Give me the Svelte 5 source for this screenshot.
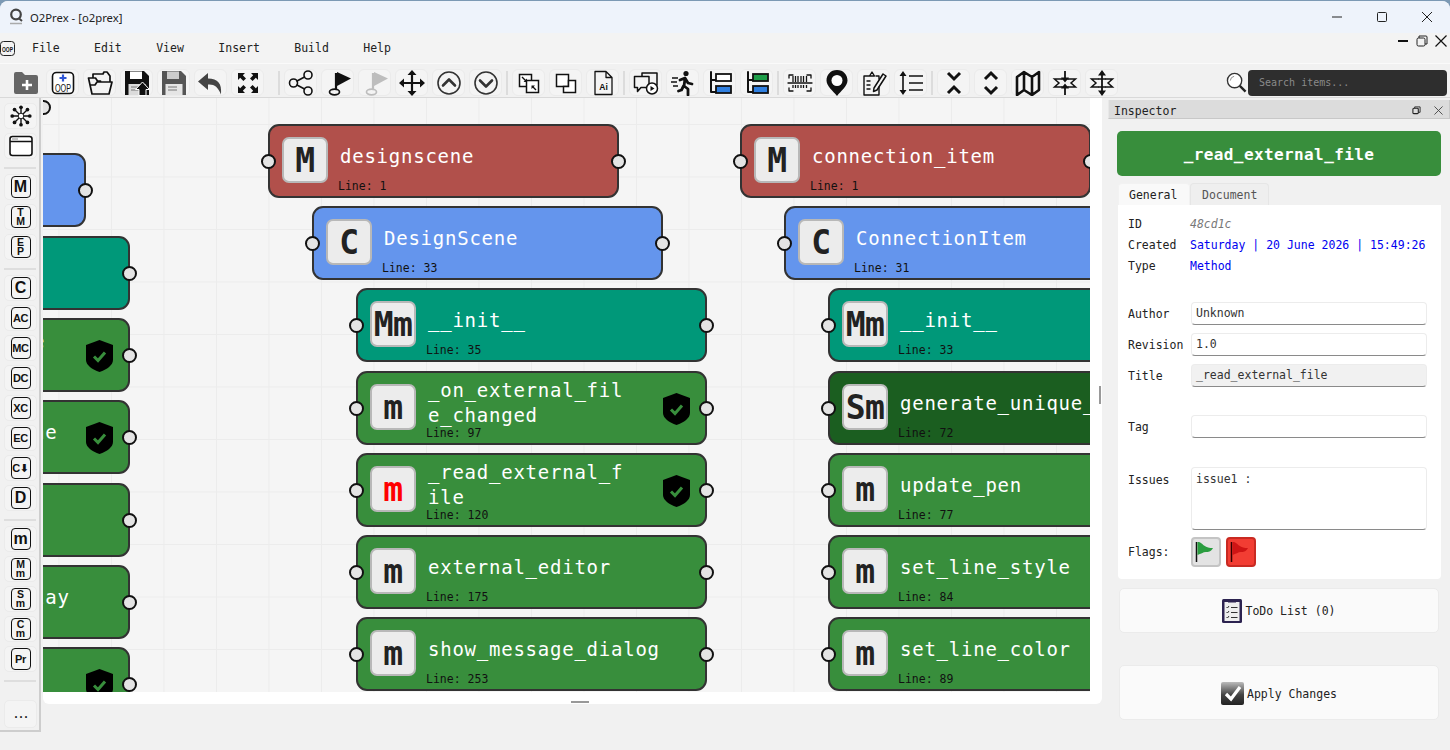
<script>
  const OX = 43, OY = 98;
  const red = '#b1504b', blue = '#6495ed', teal = '#009879', green = '#388e3c', dark = '#1b5e20';
  const n = (x, y, color, icon, title, line, shield = false, alert = false) => ({ x: x - OX, y: y - OY, color, icon, title, line, shield, alert });
  const nodes = [
    n(-265, 153, blue, 'C', '', ''),
    n(-221, 236, teal, 'Mm', '', ''),
    n(-221, 318, green, 'm', '', '', true),
    n(-221, 400, green, 'm', '', '', true),
    n(-221, 483, green, 'm', '', ''),
    n(-221, 565, green, 'm', '', ''),
    n(-221, 647, green, 'm', '', '', true),
    n(268, 124, red, 'M', 'designscene', 'Line: 1'),
    n(312, 206, blue, 'C', 'DesignScene', 'Line: 33'),
    n(356, 288, teal, 'Mm', '__init__', 'Line: 35'),
    n(356, 371, green, 'm', '_on_external_fil\ne_changed', 'Line: 97', true),
    n(356, 453, green, 'm', '_read_external_f\nile', 'Line: 120', true, true),
    n(356, 535, green, 'm', 'external_editor', 'Line: 175'),
    n(356, 617, green, 'm', 'show_message_dialog', 'Line: 253'),
    n(740, 124, red, 'M', 'connection_item', 'Line: 1'),
    n(784, 206, blue, 'C', 'ConnectionItem', 'Line: 31'),
    n(828, 288, teal, 'Mm', '__init__', 'Line: 33'),
    n(828, 371, dark, 'Sm', 'generate_unique_name', 'Line: 72'),
    n(828, 453, green, 'm', 'update_pen', 'Line: 77'),
    n(828, 535, green, 'm', 'set_line_style', 'Line: 84'),
    n(828, 617, green, 'm', 'set_line_color', 'Line: 89')
  ];
  const fragments = [
    { x: 33 - OX, y: 329 - OY, t: 'e' },
    { x: 33 - OX, y: 420 - OY, t: 'ne' },
    { x: 33 - OX, y: 585 - OY, t: 'lay' }
  ];

  const S = 'fill="none" stroke="#111" stroke-linecap="round" stroke-linejoin="round"';
  const floppy = (c, label) => `<path fill="${c}" d="M1 1h19l5 5v19H1z"/><rect x="6" y="1.500" width="12" height="7.500" fill="${label}"/><rect x="4.500" y="14" width="17" height="11" fill="#fff" opacity=".85"/><path stroke="#777" d="M7 17h9M7 20h9"/>`;
  const flag = (c) => `<path d="M11 3v17" stroke="${c}" stroke-width="2.200" fill="none"/><path fill="${c}" d="M12 2l14 6.500L12 16z"/><ellipse cx="9.500" cy="22" rx="5" ry="2.800" fill="none" stroke="${c}" stroke-width="1.700"/>`;
  const corner = `<path fill="#111" d="M3 3h7L7.800 5.200l3.200 3.200-2.600 2.600-3.200-3.200L3 10z"/>`;
  const wings = `<path fill="none" stroke="#111" stroke-width="1.500" stroke-linejoin="miter" d="M9.500 9H2.500L7 13l-4.500 4h7M16.500 9h7L19 13l4.500 4h-7"/><path stroke="#111" stroke-width="1.500" d="M9 9h8M9 17h8"/>`;
  const icons = {
    addfolder: `<path fill="#666" d="M1 4a2 2 0 0 1 2-2h6l3 3h11a2 2 0 0 1 2 2v15a2 2 0 0 1-2 2H3a2 2 0 0 1-2-2z"/><path stroke="#fff" stroke-width="2.600" d="M14 10v10M9 15h10"/>`,
    oop: `<rect x="2.500" y="2.500" width="21" height="21" rx="4" fill="#fff" stroke="#111" stroke-width="1.600"/><path stroke="#2f55d4" stroke-width="2.200" d="M13 4.500v7M9.500 8h7"/><text x="13" y="21.500" text-anchor="middle" font-family="Liberation Sans" font-weight="400" font-size="10" textLength="16" lengthAdjust="spacingAndGlyphs" fill="#111">OOP</text>`,
    open: `<path ${S} stroke-width="1.700" d="M5 24L1.500 8h7l2 3h3M5 24h17l3-12H10L8 15H3M6 8V4h10l1-2h3l3 4v6"/>`,
    saveup: floppy('#111', '#fff') + `<path fill="#111" stroke="#fff" stroke-width="1" d="M15 25.500v-6h-3.500l7-7.500 7 7.500H22v6z"/>`,
    save: floppy('#555', '#ccc'),
    undo: `<path fill="#444" d="M10 3L0 11.500 10 20v-5.500c6-.5 10 2 13 10 1-11-3-16-13-16z"/>`,
    full: corner + `<g transform="matrix(-1 0 0 1 26 0)">${corner}</g><g transform="matrix(1 0 0 -1 0 26)">${corner}</g><g transform="matrix(-1 0 0 -1 26 26)">${corner}</g>`,
    share: `<g ${S} stroke-width="1.600"><circle cx="5.500" cy="13" r="4"/><circle cx="20" cy="5" r="4"/><circle cx="20" cy="21" r="4"/><path d="M9 11l7.500-4M9 15l7.500 4"/></g>`,
    flag: flag('#111'),
    flagoff: flag('#bdbdbd'),
    move: `<path stroke="#111" stroke-width="2.200" d="M13 4v18M4 13h18"/><path fill="#111" d="M13 0l4.500 5h-9zM13 26l-4.500-5h9zM0 13l5-4.500v9zM26 13l-5 4.500v-9z"/>`,
    up: `<circle cx="13" cy="13" r="11" fill="none" stroke="#333" stroke-width="1.600"/><path fill="none" stroke="#333" stroke-width="2.600" stroke-linecap="round" stroke-linejoin="round" d="M7 15.500l6-6 6 6"/>`,
    down: `<circle cx="13" cy="13" r="11" fill="none" stroke="#333" stroke-width="1.600"/><path fill="none" stroke="#333" stroke-width="2.600" stroke-linecap="round" stroke-linejoin="round" d="M7 10.500l6 6 6-6"/>`,
    group: `<rect x="3.500" y="4.500" width="12" height="12" fill="#fff" stroke="#111" stroke-width="1.500"/><rect x="10.500" y="10.500" width="12" height="12" fill="#fff" stroke="#111" stroke-width="1.500"/><path stroke="#111" stroke-width="1.400" d="M6 7l4 4M20 20l-3.500-3.500"/><path fill="#111" d="M11 12H7.500L11 8.500zM15.500 15.500h3.500L15.500 19z"/>`,
    overlap: `<rect x="3.500" y="4.500" width="12" height="12" fill="#fff" stroke="#111" stroke-width="1.500"/><path fill="#fff" stroke="#111" stroke-width="1.500" d="M15.500 10.500h7v12h-12v-6h5z"/>`,
    ai: `<path ${S} stroke-width="1.300" d="M5 1.500h11l6 6v17H5zM16 1.500v6h6"/><text x="13.500" y="20" text-anchor="middle" font-family="Liberation Sans" font-weight="700" font-size="8.500" fill="#111">Ai</text>`,
    chat: `<path ${S} stroke-width="1.500" d="M9 6V3h15v12M1.500 6.500h14.500v11H8l-3.500 4v-4h-3z"/><circle cx="19" cy="18.500" r="5.500" fill="#fff" stroke="#111" stroke-width="1.500"/><path fill="#111" d="M17.500 16l4 2.500-4 2.500z"/>`,
    run: `<circle cx="16" cy="3.500" r="2.600" fill="#111"/><path ${S} stroke-width="2.800" d="M10 10l5-2 3 5 4 1M15 9l-1 7 4 3v6M13.500 16l-2 4-3 1"/><path stroke="#111" stroke-width="1.600" d="M2 8h6M1 12h6M3 16h5"/>`,
    treew: `<path ${S} stroke-width="2" d="M4 2v20h5M4 10h5"/><rect x="9" y="4" width="15" height="7" fill="#fff" stroke="#111" stroke-width="1.800"/><rect x="9" y="16" width="15" height="7" fill="#2f7fe0" stroke="#111" stroke-width="1.800"/>`,
    treeg: `<path ${S} stroke-width="2" d="M4 2v20h5M4 10h5"/><rect x="9" y="4" width="15" height="7" fill="#1e9e49" stroke="#111" stroke-width="1.800"/><rect x="9" y="16" width="15" height="7" fill="#2f7fe0" stroke="#111" stroke-width="1.800"/>`,
    barcode: `<path ${S} stroke-width="1.300" d="M2 8V5h4M20 5h4v3M2 18v3h4M20 21h4v-3M1 13h24"/><path stroke="#111" stroke-width="1.300" d="M6 6v6M8.500 6v6M11 6v6M14 6v6M16.500 6v6M19.500 6v6M6 15v3M8.500 15v3M11 15v3M14 15v3M16.500 15v3M19.500 15v3"/>`,
    pin: `<path fill="#111" d="M13 0C6.500 0 2.500 5 2.500 10.500 2.500 16 9 21 13 26c4-5 10.500-10 10.500-15.500C23.500 5 19.500 0 13 0z"/><circle cx="13" cy="10.500" r="5.500" fill="#fff"/>`,
    note: `<path ${S} stroke-width="1.400" d="M3 6h5M15 6h3v3M3 6v19h15V17M8.500 6l2.500-4 2.500 4zM6 11h3M6 15h3M6 19h3"/><path ${S} stroke-width="1.500" d="M13 18l9-14 3 2-9 14-3.500 1.500z"/>`,
    spacing: `<path stroke="#111" stroke-width="1.600" d="M11 6h14M11 13h14M11 20h14M5 5v16"/><path fill="#111" d="M5 1l3.500 5h-7zM5 25l-3.500-5h7z"/>`,
    collapse: `<path fill="none" stroke="#111" stroke-width="3" d="M7 3l6 6 6-6M7 23l6-6 6 6"/>`,
    expand: `<path fill="none" stroke="#111" stroke-width="3" d="M7 9l6-6 6 6M7 17l6 6 6-6"/>`,
    map: `<path fill="none" stroke="#111" stroke-width="2.600" stroke-linejoin="round" d="M2 7l7-5 8 5 7-5v18l-7 5-8-5-7 5zM9 2v18M17 7v18"/>`,
    compress: wings + `<path stroke="#111" stroke-width="1.800" d="M13 1v7M13 18v7"/><path fill="#111" d="M13 12.500L9 7.500h8zM13 13.500L9 18.500h8z"/>`,
    spread: wings + `<path stroke="#111" stroke-width="1.800" d="M13 4v18"/><path fill="#111" d="M13 0L9 5.500h8zM13 26L9 20.500h8z"/>`
  };
  const groups = [
    ['addfolder', 'oop', 'open', 'saveup', 'save', 'undo', 'full'],
    ['share', 'flag', 'flagoff', 'move', 'up', 'down'],
    ['group', 'overlap', 'ai'],
    ['chat', 'run', 'treew', 'treeg'],
    ['barcode', 'pin', 'note', 'spacing'],
    ['collapse', 'expand', 'map', 'compress', 'spread']
  ];
  const moduleGlyphs = [['M'], ['T', 'M'], ['E', 'P']];
  const classGlyphs = [['C'], ['AC'], ['MC'], ['DC'], ['XC'], ['EC'], ['C⬇'], ['D']];
  const methodGlyphs = [['m'], ['M', 'm'], ['S', 'm'], ['C', 'm'], ['Pr']];
</script>

{#snippet glyph(g)}
  <button class="pbtn">
    <span class="glyph" class:stack={g.length > 1} class:small={g.length === 1 && g[0].length > 1}>
      {#each g as l}<span>{l}</span>{/each}
    </span>
  </button>
{/snippet}

<div class="window">
  <header class="titlebar">
    <svg class="logo" viewBox="0 0 16 18" width="16" height="18"><circle cx="8" cy="6.500" r="4.800" fill="none" stroke="#444" stroke-width="2.200"/><path d="M10.500 10l3.500 3" stroke="#444" stroke-width="2"/><path d="M2 15.500h12" stroke="#aaa" stroke-width="1.500"/></svg>
    <span class="apptitle">O2Prex - [o2prex]</span>
    <div class="winctl">
      <svg viewBox="0 0 12 12" width="12" height="12"><path d="M1 6h10" stroke="#222"/></svg>
      <svg viewBox="0 0 12 12" width="12" height="12"><rect x="1.500" y="1.500" width="9" height="9" rx="1" fill="none" stroke="#222"/></svg>
      <svg viewBox="0 0 12 12" width="12" height="12"><path d="M1 1l10 10M11 1L1 11" stroke="#222"/></svg>
    </div>
  </header>

  <nav class="menubar">
    <svg class="menuicon" viewBox="0 0 15 15" width="15" height="15"><rect x=".5" y=".5" width="14" height="14" rx="3" fill="none" stroke="#222"/><text x="7.500" y="10.500" text-anchor="middle" font-family="Liberation Sans" font-weight="700" font-size="6.500" textLength="11" lengthAdjust="spacingAndGlyphs" fill="#111">OOP</text></svg>
    <ul class="menus">
      <li>File</li><li>Edit</li><li>View</li><li>Insert</li><li>Build</li><li>Help</li>
    </ul>
    <div class="mdictl">
      <svg viewBox="0 0 12 12" width="12" height="12"><path d="M1 6h10" stroke="#111" stroke-width="2"/></svg>
      <svg viewBox="0 0 12 12" width="12" height="12"><rect x="1" y="3" width="8" height="8" rx="1.500" fill="none" stroke="#222"/><path d="M3 3V1h7a1 1 0 0 1 1 1v7H9" fill="none" stroke="#222"/></svg>
      <svg viewBox="0 0 12 12" width="12" height="12"><path d="M.5.5l11 11M11.500.5l-11 11" stroke="#111" stroke-width="1.200"/></svg>
    </div>
  </nav>

  <div class="toolbar">
    {#each groups as group, g}
      {#if g > 0}<span class="tsep" class:first={g === 1}></span>{/if}
      {#each group as id}
        <button class="tbtn" class:plain={id === 'addfolder'}>
          <svg viewBox="0 0 26 26" width="26" height="26">{@html icons[id]}</svg>
        </button>
      {/each}
    {/each}
    <div class="search">
      <svg viewBox="0 0 22 22" width="21" height="21"><circle cx="9" cy="9" r="7.500" fill="#fff" stroke="#333" stroke-width="1.400"/><path d="M4.500 9a5 5 0 0 1 4-4.500" fill="none" stroke="#888"/><path d="M14.500 14.500l6 6" stroke="#222" stroke-width="2.400"/></svg>
      <div class="searchbox">Search items...</div>
    </div>
  </div>

  <main class="main">
    <aside class="palette">
      <button class="pbtn"><svg viewBox="0 0 26 26" width="24" height="24"><g stroke="#111" stroke-width="1.500"><path d="M13 13V4M13 13v9M13 13H4M13 13h9M13 13L6.500 6.500M13 13l6.500-6.500M13 13l-6.500 6.500M13 13l6.500 6.500"/></g><g fill="#111"><circle cx="13" cy="3.500" r="2"/><circle cx="13" cy="22.500" r="2"/><circle cx="3.500" cy="13" r="2"/><circle cx="22.500" cy="13" r="2"/><circle cx="6" cy="6" r="2"/><circle cx="20" cy="6" r="2"/><circle cx="6" cy="20" r="2"/><circle cx="20" cy="20" r="2"/></g><circle cx="13" cy="13" r="3" fill="#fff" stroke="#111"/></svg></button>
      <button class="pbtn"><svg viewBox="0 0 24 22" width="24" height="22"><rect x="1" y="1.500" width="22" height="19" rx="2.500" fill="#fff" stroke="#111" stroke-width="1.600"/><path d="M1 6.500h22" stroke="#111" stroke-width="1.300"/><path d="M3.500 4h5" stroke="#111" stroke-dasharray="1 1"/></svg></button>
      <span class="psep"></span>
      {#each moduleGlyphs as g}{@render glyph(g)}{/each}
      <span class="psep"></span>
      {#each classGlyphs as g}{@render glyph(g)}{/each}
      <span class="psep"></span>
      {#each methodGlyphs as g}{@render glyph(g)}{/each}
      <span class="psep"></span>
      <button class="pbtn more">...</button>
    </aside>

    <section class="canvaswrap">
      <div class="canvas">
        <span class="port stray"></span>
        {#each nodes as node}
          <article class="node" style="left:{node.x}px;top:{node.y}px;background:{node.color}">
            <span class="port pl"></span>
            <span class="badge" class:alert={node.alert}>{node.icon}</span>
            <span class="name">{node.title}</span>
            {#if node.line}<span class="line">{node.line}</span>{/if}
            {#if node.shield}
              <svg class="shield" viewBox="0 0 27 32" width="27" height="32"><path d="M13.500 0L27 5v15c0 5-6 9.500-13.500 12C6 29.500 0 25 0 20V5z" fill="#000"/><path d="M8 16.500l4 4 7-8" fill="none" stroke="#388e3c" stroke-width="3"/></svg>
            {/if}
            <span class="port pr"></span>
          </article>
        {/each}
        {#each fragments as f}
          <span class="fragment" style="left:{f.x}px;top:{f.y}px">{f.t}</span>
        {/each}
      </div>
      <span class="hgrip"></span>
      <span class="vgrip"></span>
    </section>

    <aside class="inspector">
      <header class="insphead">
        <span>Inspector</span>
        <div class="inspctl">
          <svg viewBox="0 0 10 10" width="9" height="9"><rect x="1" y="2.500" width="6" height="6" rx="1" fill="none" stroke="#222" stroke-width="1.200"/><path d="M3 2.500V1h6v6H7" fill="none" stroke="#222"/></svg>
          <svg viewBox="0 0 10 10" width="9" height="9"><path d="M.5.5l9 9M9.500.5l-9 9" stroke="#444"/></svg>
        </div>
      </header>
      <div class="nametag">_read_external_file</div>
      <div class="tabs">
        <span class="tab active">General</span>
        <span class="tab">Document</span>
      </div>
      <div class="panel">
        <div class="info"><label>ID</label><span class="idv">48cd1c</span></div>
        <div class="info"><label>Created</label><span class="val">Saturday | 20 June 2026 | 15:49:26</span></div>
        <div class="info"><label>Type</label><span class="val">Method</span></div>
        <div class="field author"><label>Author</label><div class="input">Unknown</div></div>
        <div class="field"><label>Revision</label><div class="input">1.0</div></div>
        <div class="field"><label>Title</label><div class="input ro">_read_external_file</div></div>
        <div class="field tag"><label>Tag</label><div class="input"></div></div>
        <div class="field issues"><label>Issues</label><div class="input area">issue1 :</div></div>
        <div class="field flags">
          <label>Flags:</label>
          <button class="flagbtn g"><svg viewBox="0 0 26 26" width="26" height="26"><path d="M3.500 3v20" stroke="#111" stroke-width="1.500"/><path d="M4.500 3C8 3 9 5 11 6.500c3 2 5 2.500 9 2.500-2 4-5 4-7 4-3 0-5 2-8.500 3z" fill="#2a9d3f"/></svg></button>
          <button class="flagbtn r"><svg viewBox="0 0 26 26" width="26" height="26"><path d="M3.500 3v20" stroke="#300" stroke-width="1.500"/><path d="M4.500 3C8 3 9 5 11 6.500c3 2 5 2.500 9 2.500-2 4-5 4-7 4-3 0-5 2-8.500 3z" fill="#cf1414"/></svg></button>
        </div>
      </div>
      <button class="wide todo">
        <svg viewBox="0 0 20 24" width="20" height="24"><rect x="0" y="0" width="20" height="24" rx="1.500" fill="#2c2350"/><rect x="2.500" y="3" width="15" height="19" fill="#eee"/><rect x="6" y="0" width="8" height="3.500" fill="#2c2350"/><path d="M4.500 8l1 1 1.500-2M4.500 13l1 1 1.500-2M4.500 18l1 1 1.500-2" fill="none" stroke="#333"/><path d="M9 8.500h6.500M9 13.500h6.500M9 18.500h6.500" stroke="#333"/></svg>
        <span>ToDo List (0)</span>
      </button>
      <button class="wide apply">
        <svg viewBox="0 0 23 23" width="23" height="23"><defs><linearGradient id="ag" x1="0" y1="0" x2="0" y2="1"><stop offset="0" stop-color="#bbb"/><stop offset=".55" stop-color="#444"/><stop offset="1" stop-color="#222"/></linearGradient></defs><rect width="23" height="23" rx="2" fill="url(#ag)"/><path d="M5 12l5 5 9-12" fill="none" stroke="#fff" stroke-width="3.200"/></svg>
        <span>Apply Changes</span>
      </button>
    </aside>
  </main>
</div>

<style>
  :global(body) { margin: 0; background: #7c99b4; overflow: hidden; }
  * { box-sizing: border-box; }
  button { font: inherit; color: inherit; padding: 0; }
  .window {
    width: 1450px; height: 749px; margin-top: 1px; background: #f1f1f1;
    border-radius: 8px 8px 0 0; overflow: hidden; display: flex; flex-direction: column;
    font-family: "DejaVu Sans Mono", "Liberation Mono", monospace; font-size: 11.5px; color: #222;
  }
  .titlebar { height: 32px; flex: none; background: #eef3fb; display: flex; align-items: center; padding-left: 8px; }
  .logo { margin-right: 6px; }
  .apptitle { font-family: "Noto Sans", "Open Sans", sans-serif; font-size: 11.3px; color: #222; }
  .winctl { margin-left: auto; display: flex; gap: 33px; padding-right: 17px; }
  .menubar { height: 31px; flex: none; display: flex; align-items: center; background: #f3f3f3; position: relative; border-bottom: 1px solid #fafafa; }
  .menuicon { margin-top: 1px; }
  .menus { display: flex; list-style: none; margin: 0 0 0 17px; padding: 0; gap: 34.400px; }
  .menus li { color: #222; }
  .mdictl { margin-left: auto; display: flex; gap: 7px; margin-right: 3px; margin-top: -14px; }
  .toolbar { height: 33px; flex: none; display: flex; align-items: center; gap: 4px; padding: 4px 0 0 9px; background: #f1f1f1; }
  .tbtn { width: 33px; height: 27px; background: #f4f4f4; border: 1px solid #ebebeb; border-radius: 6px; display: flex; align-items: center; justify-content: center; }
  .tbtn svg { display: block; }
  .tbtn.plain { background: none; border-color: transparent; }
  .tsep { width: 2px; height: 24px; background: #dcdcdc; }
  .tsep.first { margin-left: 10px; }
  .search { margin-left: auto; display: flex; align-items: center; gap: 1px; margin-right: 3px; }
  .searchbox { width: 199px; height: 26px; border-radius: 4px; background: #2e2e2e; color: #8a8a8a; font-size: 10px; padding-left: 11px; line-height: 26px; }
  .main { flex: 1; min-height: 0; display: flex; border-top: 1px solid #d9d9d9; }
  .palette { width: 41px; height: 634px; flex: none; background: #f1f1f1; border-right: 2px solid #cdcdcd; border-bottom: 2px solid #cdcdcd; display: flex; flex-direction: column; align-items: flex-start; padding: 5px 0 0 4px; gap: 4px; }
  .pbtn { width: 33px; height: 26px; background: #f4f4f4; border: 1px solid #ebebeb; border-radius: 5px; display: flex; align-items: center; justify-content: center; flex: none; }
  .psep { width: 32px; height: 2px; margin: 4px 0 1px; flex: none; background: #dedede; }
  .more { height: 28px; margin-top: 13px; font-weight: 700; font-size: 10px; letter-spacing: -1px; }
  .glyph { width: 20px; height: 22px; border: 1.800px solid #111; border-radius: 4px; font-family: "Liberation Sans", "DejaVu Sans", sans-serif; font-weight: 700; color: #111; font-size: 16px; line-height: 1; display: flex; flex-direction: column; align-items: center; justify-content: center; white-space: nowrap; }
  .glyph.small { font-size: 11px; letter-spacing: -.4px; }
  .glyph.stack { font-size: 10.500px; line-height: 9px; }
  .canvaswrap { width: 1059px; height: 606px; margin-left: 2px; background: #fff; border-radius: 0 0 6px 6px; padding: 0 12px 12px 0; position: relative; flex: none; }
  .canvas {
    position: relative; width: 100%; height: 100%; overflow: hidden; background-color: #f5f5f5;
    background-image: linear-gradient(#ececec 1px, transparent 1px), linear-gradient(90deg, #ececec 1px, transparent 1px);
    background-size: 52.5px 52.5px; background-position: 15.500px 26px;
  }
  .node { position: absolute; width: 351px; height: 74px; border: 2px solid #333; border-radius: 11px; display: flex; align-items: center; color: #fff; }
  .badge { position: relative; width: 46px; height: 46px; margin: -2px 0 0 12px; flex: none; background: #ececec; border: 2px solid #b8b8b8; border-radius: 7px; color: #222; font-size: 33px; font-weight: 700; display: flex; align-items: center; justify-content: center; white-space: nowrap; letter-spacing: -.5px; }
  .badge.alert { color: #f00; }
  .name { margin: -10px 0 0 12px; font-size: 19px; letter-spacing: .76px; line-height: 25px; white-space: pre; }
  .line { position: absolute; left: 68px; bottom: 3px; font-size: 11.500px; line-height: 14px; color: #111; }
  .shield { position: absolute; right: 15px; top: 20px; }
  .port { position: absolute; width: 15px; height: 15px; border-radius: 50%; background: #e4e4e4; border: 2px solid #111; }
  .pl { left: -9.500px; top: 27.500px; }
  .pr { right: -9px; top: 27.500px; }
  .stray { left: -7px; top: 2px; }
  .fragment { position: absolute; font-size: 19px; letter-spacing: .76px; line-height: 25px; color: #fff; }
  .hgrip { position: absolute; left: 528px; bottom: 1px; width: 18px; height: 2px; background: #999; }
  .vgrip { position: absolute; right: 1px; top: 288px; width: 2px; height: 18px; background: #999; }
  .inspector { flex: 1; margin-left: 6px; display: flex; flex-direction: column; position: relative; }
  .insphead { height: 19px; margin-top: 2px; padding: 3px 6px 0 5px; background: #dcdcdc; border-bottom: 1px solid #c8c8c8; border-right: 1px solid #c8c8c8; border-left: 1px solid #e8e8e8; display: flex; align-items: center; justify-content: space-between; flex: none; }
  .inspctl { display: flex; gap: 13px; }
  .nametag { margin: 12px 9px 0 9px; height: 45px; padding-top: 1px; background: #388e3c; border-radius: 5px; color: #fff; font-size: 16px; font-weight: 700; letter-spacing: .4px; display: flex; align-items: center; justify-content: center; flex: none; }
  .tabs { display: flex; margin: 7px 0 0 10px; flex: none; }
  .tab { height: 22px; padding: 0 11px; line-height: 22px; background: #efefef; border: 1px solid #e6e6e6; border-bottom: 0; border-radius: 4px 4px 0 0; color: #555; }
  .tab.active { background: #f9f9f9; color: #222; width: 72px; padding: 0 10px; border-color: #f2f2f2; }
  .panel { margin: 0 9px 0 10px; height: 374px; background: #fff; border-radius: 0 0 4px 4px; padding: 8px 14px 0 10px; flex: none; }
  .info { display: flex; height: 21px; align-items: center; }
  label { width: 63px; flex: none; color: #222; }
  .val { color: #0000f0; white-space: nowrap; margin-left: -1px; }
  .idv { color: #777; font-style: italic; margin-left: -1px; }
  .field { display: flex; align-items: center; margin-top: 8px; }
  .field.author { margin-top: 26px; }
  .field.tag { margin-top: 28px; }
  .field.issues { margin-top: 29px; align-items: flex-start; }
  .field.issues label { margin-top: 6px; }
  .field.flags { margin-top: 7px; }
  .input { width: 236px; height: 23px; border: 1px solid #ececec; border-bottom: 1px solid #8a8a8a; border-radius: 4px; padding: 0 4px; line-height: 21px; color: #333; }
  .input.ro { background: #f1f1f1; }
  .input.area { height: 63px; padding-top: 1px; }
  .flagbtn { width: 30px; height: 30px; border-radius: 4px; margin-right: 5px; display: flex; align-items: center; justify-content: center; }
  .flagbtn.g { background: #e3e3e3; border: 2px solid #c4c4c4; }
  .flagbtn.r { background: #f23d33; border: 2px solid #c92a22; }
  .wide { margin-left: 11px; width: 320px; padding-top: 1px; background: #fafafa; border: 1px solid #ebebeb; border-radius: 5px; display: flex; align-items: center; justify-content: center; gap: 3px; color: #222; flex: none; }
  .todo { height: 45px; margin-top: 9px; }
  .apply { height: 55px; margin-top: 32px; padding-top: 2px; }
</style>
